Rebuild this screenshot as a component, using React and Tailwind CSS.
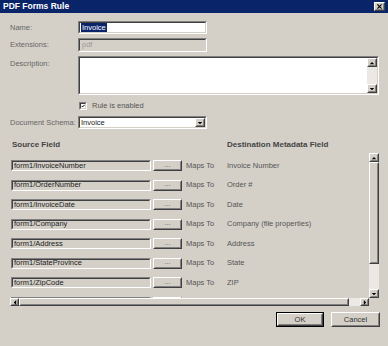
import React from "react";

const rows = [
  ["form1/InvoiceNumber", "Invoice Number"],
  ["form1/OrderNumber", "Order #"],
  ["form1/InvoiceDate", "Date"],
  ["form1/Company", "Company (file properties)"],
  ["form1/Address", "Address"],
  ["form1/StateProvince", "State"],
  ["form1/ZipCode", "ZIP"],
  ["", ""],
];

// classic sunken edit box
const Sunken = ({ className = "", inner = "bg-white", children }) => (
  <div className={`border border-t-[#808080] border-l-[#808080] border-b-white border-r-white ${className}`}>
    <div className={`w-full h-full border border-t-[#404040] border-l-[#404040] border-b-[#d4d0c8] border-r-[#d4d0c8] flex items-center overflow-hidden ${inner}`}>
      {children}
    </div>
  </div>
);

// classic raised button face
const Raised = ({ className = "", children }) => (
  <div className={`border border-t-white border-l-white border-b-[#404040] border-r-[#404040] bg-[#d4d0c8] ${className}`}>
    <div className="w-full h-full border border-t-[#d4d0c8] border-l-[#d4d0c8] border-b-[#808080] border-r-[#808080] flex items-center justify-center">
      {children}
    </div>
  </div>
);

const Arrow = ({ dir }) => {
  const pts = {
    up: "1,4 4,1 7,4",
    down: "1,1 4,4 7,1",
    left: "4,0 1,3 4,6",
    right: "1,0 4,3 1,6",
  }[dir];
  const vb = dir === "up" || dir === "down" ? "0 0 8 5" : "0 0 5 6";
  return (
    <svg viewBox={vb} className={dir === "up" || dir === "down" ? "w-[6px] h-[4px]" : "w-[4px] h-[5px]"}>
      <polygon points={pts} fill="#000" />
    </svg>
  );
};

const Label = ({ children }) => <div className="w-[68px] shrink-0 text-[#666]">{children}</div>;

export default function App() {
  return (
    <div className="w-[388px] h-[346px] bg-[#d4d0c8] font-['Liberation_Sans',Arial,sans-serif] text-[7.5px] leading-none text-[#333] flex flex-col overflow-hidden select-none">
      <div className="h-[13px] bg-[#0a246a] flex items-center justify-between pl-[3px] pr-[3px] shrink-0">
        <span className="text-white font-bold text-[8.5px]">PDF Forms Rule</span>
        <Raised className="w-[11px] h-[9px]">
          <svg viewBox="0 0 6 6" className="w-[5px] h-[5px]">
            <path d="M0.5 0.5 L5.5 5.5 M5.5 0.5 L0.5 5.5" stroke="#000" strokeWidth="1.4" />
          </svg>
        </Raised>
      </div>

      <div className="pl-[10px] flex flex-col">
        <div className="flex items-center mt-[8px]">
          <Label>Name:</Label>
          <Sunken className="w-[129px] h-[13px]">
            <span className="ml-[1px] bg-[#0a246a] text-white px-[1px] py-[1px]">Invoice</span>
          </Sunken>
        </div>
        <div className="flex items-center mt-[4px]">
          <Label>Extensions:</Label>
          <Sunken className="w-[129px] h-[14px]" inner="bg-[#d4d0c8]">
            <span className="ml-[2px] text-[#9a9a9a]">pdf</span>
          </Sunken>
        </div>
        <div className="flex items-start mt-[4px]">
          <div className="w-[68px] shrink-0 text-[#666] pt-[4px]">Description:</div>
          <Sunken className="w-[301px] h-[39px]">
            <div className="flex-1 h-full" />
            <div className="w-[10px] h-full flex flex-col bg-[#ece9e4]">
              <Raised className="w-[10px] h-[9px]"><Arrow dir="up" /></Raised>
              <div className="flex-1" />
              <Raised className="w-[10px] h-[9px]"><Arrow dir="down" /></Raised>
            </div>
          </Sunken>
        </div>
        <div className="flex items-center mt-[7px] ml-[69px]">
          <Sunken className="w-[8px] h-[8px]">
            <svg viewBox="0 0 6 6" className="w-[6px] h-[6px]">
              <path d="M0.8 2.8 L2.4 4.4 L5.4 1.2" stroke="#000" strokeWidth="1.5" fill="none" />
            </svg>
          </Sunken>
          <span className="ml-[5px] text-[#555]">Rule is enabled</span>
        </div>
        <div className="flex items-center mt-[6px]">
          <Label>Document Schema:</Label>
          <Sunken className="w-[129px] h-[13px]">
            <span className="ml-[1px] flex-1 text-[#222]">Invoice</span>
            <Raised className="w-[10px] h-full"><Arrow dir="down" /></Raised>
          </Sunken>
        </div>

        <div className="flex mt-[12px] font-bold text-[#444] text-[8px]">
          <div className="w-[217px] pl-[2px]">Source Field</div>
          <div>Destination Metadata Field</div>
        </div>

        <div className="mt-[4px] w-[369px] h-[153px] flex flex-col">
          <div className="flex h-[145px]">
            <div className="flex-1 overflow-hidden pt-[7px]">
              {rows.map(([src, dst], i) => (
                <div key={i} className="h-[19.5px] flex items-start">
                  <Sunken className="w-[140px] h-[11px] ml-[1px]" inner="bg-[#d4d0c8]">
                    <span className="ml-[1px] text-[#222]">{src}</span>
                  </Sunken>
                  <Raised className="w-[29px] h-[11px] ml-[2px]">
                    {src && <span className="text-[#666] -mt-[2px]">...</span>}
                  </Raised>
                  <div className="w-[41px] ml-[4px] h-[11px] flex items-center text-[#555]">{src && "Maps To"}</div>
                  <div className="h-[11px] flex items-center text-[#555]">{dst}</div>
                </div>
              ))}
            </div>
            <div className="w-[10px] h-full flex flex-col bg-[#ece9e4]">
              <Raised className="w-[10px] h-[9px]"><Arrow dir="up" /></Raised>
              <Raised className="w-[10px] h-[102px]" />
              <div className="flex-1" />
              <Raised className="w-[10px] h-[9px]"><Arrow dir="down" /></Raised>
            </div>
          </div>
          <div className="flex h-[8px]">
            <div className="w-[359px] flex bg-[#ece9e4]">
              <Raised className="w-[9px] h-[8px]"><Arrow dir="left" /></Raised>
              <Raised className="w-[330px] h-[8px]" />
              <div className="flex-1" />
              <Raised className="w-[9px] h-[8px]"><Arrow dir="right" /></Raised>
            </div>
          </div>
        </div>

        <div className="flex justify-end gap-[7px] mt-[6px] w-[370px]">
          <div className="border border-black">
            <Raised className="w-[46px] h-[13px]"><span className="text-[#333]">OK</span></Raised>
          </div>
          <Raised className="w-[49px] h-[15px]"><span className="text-[#333]">Cancel</span></Raised>
        </div>
      </div>
    </div>
  );
}
